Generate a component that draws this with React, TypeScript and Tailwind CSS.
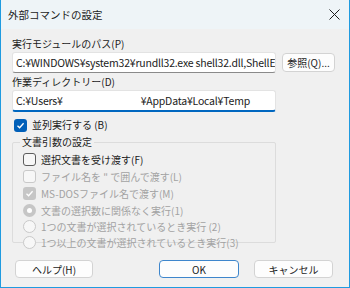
import React from 'react';

const font = { fontFamily: '"Noto Sans CJK JP", "Noto Sans", sans-serif' };

// Checkbox glyph (Windows 11 style)
const Check: React.FC<{ checked?: boolean; disabled?: boolean }> = ({ checked, disabled }) => {
  if (checked) {
    return (
      <span
        className={`flex h-[13px] w-[13px] shrink-0 items-center justify-center rounded-[3px] ${
          disabled ? 'bg-[#c6c6c6]' : 'bg-[#005fb8]'
        }`}
      >
        <svg width="9" height="9" viewBox="0 0 9 9" fill="none">
          <path d="M1.5 4.8 L3.6 6.8 L7.6 2.2" stroke="white" strokeWidth="1.3" />
        </svg>
      </span>
    );
  }
  return (
    <span
      className={`block h-[13px] w-[13px] shrink-0 rounded-[3px] border bg-[#f7f7f7] ${
        disabled ? 'border-[#c9c9c9]' : 'border-[#5d5d5d]'
      }`}
    />
  );
};

const Radio: React.FC<{ selected?: boolean }> = ({ selected }) =>
  selected ? (
    <span className="flex h-[13px] w-[13px] shrink-0 items-center justify-center rounded-full bg-[#c6c6c6]">
      <span className="block h-[5px] w-[5px] rounded-full bg-white" />
    </span>
  ) : (
    <span className="block h-[13px] w-[13px] shrink-0 rounded-full border border-[#c9c9c9] bg-[#f7f7f7]" />
  );

const Btn: React.FC<{ label: string; primary?: boolean; className?: string }> = ({ label, primary, className }) => (
  <div
    className={`flex items-center justify-center rounded-[4px] bg-[#fdfdfd] text-[10px] text-[#1b1b1b] ${
      primary ? 'border border-[#3e86cc]' : 'border border-[#d3d3d3]'
    } ${className ?? ''}`}
  >
    {label}
  </div>
);

export default function App() {
  return (
    <div style={font} className="h-[288px] w-[350px] overflow-hidden bg-[#f0f0f0]">
      <div className="flex h-full flex-col border-x border-b border-[#1f9be0]">
        {/* Title bar */}
        <div className="flex h-[29px] shrink-0 items-center justify-between bg-[#eef4f7] pl-[7px] pr-[8px]">
          <span className="text-[10.5px] text-[#1b1b1b]">外部コマンドの設定</span>
          <svg width="11" height="11" viewBox="0 0 11 11" className="mr-[1px]">
            <path d="M0.5 0.5 L10.5 10.5 M10.5 0.5 L0.5 10.5" stroke="#1b1b1b" strokeWidth="1" />
          </svg>
        </div>

        {/* Body */}
        <div className="flex flex-1 flex-col px-[11px] text-[10px] text-[#1b1b1b]">
          <div className="mt-[7px] leading-[15px]">実行モジュールのパス(P)</div>
          <div className="mt-[1px] flex items-end gap-[6px]">
            <div className="flex h-[21px] w-[264px] items-center overflow-hidden whitespace-nowrap rounded-[3px] border border-[#e3e3e3] border-b-[#8a8a8a] bg-white px-[3px] text-[10.5px] tracking-[-0.2px]">
              C:¥WINDOWS¥system32¥rundll32.exe shell32.dll,ShellE
            </div>
            <Btn label="参照(Q)..." className="mb-[1px] h-[19px] w-[53px]" />
          </div>

          <div className="mt-[1px] leading-[15px]">作業ディレクトリー(D)</div>
          <div className="mt-[1px] flex h-[22px] w-[264px] items-center overflow-hidden whitespace-nowrap rounded-[3px] border border-[#e3e3e3] border-b-2 border-b-[#0067c0] bg-white px-[3px] text-[10.5px] tracking-[-0.2px]">
            <span>C:¥Users¥</span>
            <span className="ml-[78px]">¥AppData¥Local¥Temp</span>
          </div>

          <div className="mt-[6px] flex h-[14px] items-center gap-[5px] pl-[2px]">
            <Check checked />
            <span className="leading-[14px]">並列実行する (B)</span>
          </div>

          {/* Group box */}
          <div className="relative mt-[10px] h-[101px] w-[264px] rounded-[2px] border border-[#dcdcdc]">
            <span className="absolute left-[7px] top-[-8px] bg-[#f0f0f0] px-[2px] leading-[14px]">文書引数の設定</span>
            <div className="flex flex-col pl-[10px] pt-[8px]">
              <div className="flex h-[17px] items-center gap-[5px]">
                <Check />
                <span>選択文書を受け渡す(F)</span>
              </div>
              <div className="flex h-[17px] items-center gap-[5px] text-[#a2a2a2]">
                <Check disabled />
                <span>ファイル名を " で囲んで渡す(L)</span>
              </div>
              <div className="flex h-[17px] items-center gap-[5px] text-[#a2a2a2]">
                <Check checked disabled />
                <span>MS-DOSファイル名で渡す(M)</span>
              </div>
              <div className="flex h-[16px] items-center gap-[5px] text-[#a2a2a2]">
                <Radio selected />
                <span>文書の選択数に関係なく実行(1)</span>
              </div>
              <div className="flex h-[16px] items-center gap-[5px] text-[#a2a2a2]">
                <Radio />
                <span>1つの文書が選択されているとき実行 (2)</span>
              </div>
              <div className="flex h-[16px] items-center gap-[5px] text-[#a2a2a2]">
                <Radio />
                <span>1つ以上の文書が選択されているとき実行(3)</span>
              </div>
            </div>
          </div>

          {/* Buttons */}
          <div className="mt-[17px] flex items-center pl-[3px]">
            <Btn label="ヘルプ(H)" className="h-[18px] w-[78px]" />
            <Btn label="OK" primary className="ml-[66px] h-[18px] w-[80px]" />
            <Btn label="キャンセル" className="ml-[15px] h-[18px] w-[79px]" />
          </div>
        </div>
      </div>
    </div>
  );
}
